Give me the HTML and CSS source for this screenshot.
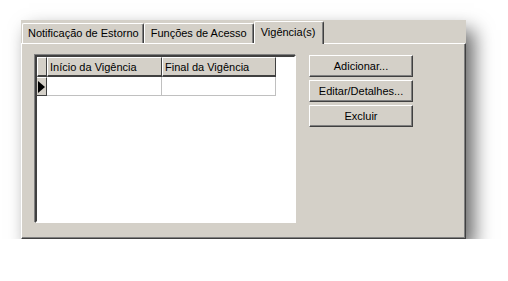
FILE: index.html
```html
<!DOCTYPE html>
<html>
<head>
  <title>Vigência(s)</title>
  <link rel="stylesheet" href="styles.css">
</head>
<body>
  <div class="window">
    <div class="tabs">
      <div class="tab">Notificação de Estorno</div>
      <div class="tab access">Funções de Acesso</div>
      <div class="tab active">Vigência(s)</div>
    </div>
    <div class="panel">
      <div class="grid">
        <div class="grid-head">
          <div class="cell indicator"></div>
          <div class="cell col1">Início da Vigência</div>
          <div class="cell col2">Final da Vigência</div>
        </div>
        <div class="grid-row">
          <div class="cell indicator"><span class="arrow"></span></div>
          <div class="cell col1"></div>
          <div class="cell col2"></div>
        </div>
      </div>
      <div class="actions">
        <button>Adicionar...</button>
        <button>Editar/Detalhes...</button>
        <button>Excluir</button>
      </div>
    </div>
  </div>
</body>
</html>
```

FILE: styles.css
```css
body {
  margin: 0;
  background-color: #fff;
  font-family: Tahoma, 'Liberation Sans', 'DejaVu Sans', sans-serif;
  font-size: 11px;
  color: #000;
}
.window {
  margin: 20px 0 0 21px;
  width: 445px;
  height: 219px;
  background-color: #d4d0c8;
  box-shadow: 8px 10px 18px rgba(0, 0, 0, 0.6);
  display: flex;
  flex-direction: column;
}
.tabs {
  height: 23px;
  display: flex;
  align-items: flex-end;
  padding-left: 1px;
  position: relative;
  z-index: 1;
}
.tab {
  height: 19px;
  line-height: 18px;
  padding: 0 4px 0 5px;
  border-top: 1px solid #fff;
  border-left: 1px solid #fff;
  border-right: 1px solid #404040;
  box-shadow: inset -1px 0 0 #808080;
  border-radius: 2px 2px 0 0;
  white-space: nowrap;
}
.tab.access {
  padding: 0 6px 0 6px;
}
.tab.active {
  height: 22px;
  line-height: 20px;
  margin-bottom: -1px;
  padding: 0 7px 0 6px;
  background-color: #d4d0c8;
}
.panel {
  flex-grow: 1;
  border-top: 1px solid #fff;
  border-left: 1px solid #fff;
  border-right: 1px solid #404040;
  border-bottom: 1px solid #404040;
  box-shadow: inset -1px -1px 0 #808080;
  display: flex;
  padding: 11px 0 0 13px;
}
.grid {
  width: 257px;
  height: 164px;
  background-color: #fff;
  border-top: 2px solid #404040;
  border-left: 2px solid #404040;
  border-right: 2px solid #fff;
  border-bottom: 2px solid #fff;
  box-shadow: -1px -1px 0 #808080, 1px 1px 0 #d4d0c8;
}
.grid-head, .grid-row {
  display: flex;
}
.cell {
  box-sizing: border-box;
  white-space: nowrap;
  overflow: hidden;
}
.grid-head .cell {
  height: 20px;
  line-height: 18px;
  padding-left: 2px;
  background-color: #d4d0c8;
  border-top: 1px solid #fff;
  border-left: 1px solid #fff;
  border-right: 1px solid #404040;
  border-bottom: 2px solid #404040;
}
.grid-row .cell {
  height: 19px;
  border-right: 1px solid #c0c0c0;
  border-bottom: 1px solid #c0c0c0;
}
.indicator {
  width: 10px;
}
.col1 {
  width: 115px;
}
.col2 {
  width: 114px;
}
.grid-row .indicator {
  background-color: #d4d0c8;
  border-right: 1px solid #404040;
  border-bottom: 1px solid #404040;
  border-top: 1px solid #fff;
  display: flex;
  align-items: center;
}
.arrow {
  width: 0;
  height: 0;
  margin-left: 1px;
  border-top: 6px solid transparent;
  border-bottom: 6px solid transparent;
  border-left: 7px solid #000;
}
.actions {
  margin-left: 13px;
  display: flex;
  flex-direction: column;
  gap: 3px;
}
.actions button {
  width: 104px;
  height: 22px;
  padding: 0;
  font-family: inherit;
  font-size: 11px;
  color: #000;
  background-color: #d4d0c8;
  border-top: 1px solid #fff;
  border-left: 1px solid #fff;
  border-right: 1px solid #404040;
  border-bottom: 1px solid #404040;
  box-shadow: inset -1px -1px 0 #808080;
}
```
